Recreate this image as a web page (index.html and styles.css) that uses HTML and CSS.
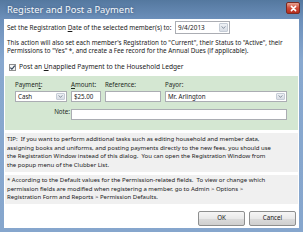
FILE: index.html
```html
<!DOCTYPE html>
<html>
<head>
<meta charset="utf-8">
<link rel="stylesheet" href="styles.css">
</head>
<body>
<div class="window">
  <div class="titlebar">
    <span class="title">Register and Post a Payment</span>
    <span class="close"><svg viewBox="0 0 10 10" width="7" height="7"><path d="M2 2 L8 8 M8 2 L2 8" stroke="#fff" stroke-width="2.2" stroke-linecap="round"/></svg></span>
  </div>
  <div class="client">
    <div class="daterow">
      <span class="txt">Set the Registration <u>D</u>ate of the selected member(s) to:</span>
      <span class="combo date"><span class="val">9/4/2013</span><span class="drop"><svg viewBox="0 0 6 4" width="5" height="3"><path d="M0.5 0.5 L3 3.2 L5.5 0.5" fill="none" stroke="#6a7585" stroke-width="1"/></svg></span></span>
    </div>
    <p class="para">This action will also set each member's Registration to "Current", their Status to "Active", their<br>Permissions to "Yes" *, and create a Fee record for the Annual Dues (if applicable).</p>
    <div class="checkrow">
      <span class="check"><svg viewBox="0 0 8 8" width="7" height="7"><path d="M1.5 4.2 L3.3 6 L6.6 1.8" fill="none" stroke="#2d3f56" stroke-width="1.3"/></svg></span>
      <span class="txt">Post an <u>U</u>napplied Payment to the Household Ledger</span>
    </div>
    <div class="green">
      <div class="grid">
        <span class="lbl c1">Paymen<u>t</u>:</span>
        <span class="lbl c2"><u>A</u>mount:</span>
        <span class="lbl c3">Reference:</span>
        <span class="lbl c4">Payor:</span>
        <span class="combo c1"><span class="val">Cash</span><span class="drop"><svg viewBox="0 0 6 4" width="5" height="3"><path d="M0.5 0.5 L3 3.2 L5.5 0.5" fill="none" stroke="#6a7585" stroke-width="1"/></svg></span></span>
        <span class="input c2"><span class="val">$25.00</span></span>
        <span class="input c3"></span>
        <span class="combo c4"><span class="val">Mr. Arlington</span><span class="drop"><svg viewBox="0 0 6 4" width="5" height="3"><path d="M0.5 0.5 L3 3.2 L5.5 0.5" fill="none" stroke="#6a7585" stroke-width="1"/></svg></span></span>
        <span class="lbl note">Note:</span>
        <span class="input noteinput"></span>
      </div>
    </div>
    <div class="panel tip">TIP:&nbsp; If you want to perform additional tasks such as editing household and member data,<br>assigning books and uniforms, and posting payments directly to the new fees, you should use<br>the Registration Window instead of this dialog.&nbsp; You can open the Registration Window from<br>the popup menu of the Clubber List.</div>
    <div class="panel foot">* According to the Default values for the Permission-related fields.&nbsp; To view or change which<br>permission fields are modified when registering a member, go to Admin &gt; Options &gt;<br>Registration Form and Reports &gt; Permission Defaults.</div>
    <div class="buttons">
      <span class="btn">OK</span>
      <span class="btn">Cancel</span>
    </div>
  </div>
</div>
</body>
</html>
```

FILE: styles.css
```css
html, body {
  margin: 0;
  padding: 0;
}
body {
  width: 303px;
  height: 232px;
  overflow: hidden;
  font-family: "Noto Sans", "DejaVu Sans", sans-serif;
}
.window {
  width: 303px;
  height: 232px;
  box-sizing: border-box;
  background: linear-gradient(to bottom, #54789f 0px, #6c8fba 19px, #88a8cf 60px, #86a6cd 100%);
  padding: 0 4px 4px 4px;
  display: flex;
  flex-direction: column;
}
.titlebar {
  height: 19px;
  flex: none;
  display: flex;
  align-items: center;
  justify-content: space-between;
  padding-left: 3px;
}
.title {
  color: #f4f8fc;
  font-size: 9.4px;
  text-shadow: 0 0 3px rgba(40, 60, 90, 0.6);
}
.close {
  width: 14px;
  height: 12px;
  margin-top: -3px;
  margin-right: -1px;
  box-sizing: border-box;
  border: 1px solid #7a2a22;
  border-radius: 2px;
  background: linear-gradient(to bottom, #e8a392, #cf4a38 50%, #b52d1d);
  display: flex;
  align-items: center;
  justify-content: center;
}
.close svg { display: block; }
.client {
  flex: 1;
  background: #ffffff;
  display: flex;
  flex-direction: column;
  padding: 0 1px;
  font-size: 6px;
  color: #1a1a1a;
  line-height: 8px;
  white-space: nowrap;
}
.daterow {
  display: flex;
  align-items: center;
  margin-top: 2px;
  padding-left: 2px;
  height: 13px;
  font-size: 6.4px;
}
.daterow .txt { width: 168px; }
.combo, .input {
  box-sizing: border-box;
  border: 1px solid #abadb3;
  background: #fff;
  display: flex;
  align-items: center;
}
.combo .val, .input .val {
  flex: 1;
  padding-left: 2px;
  overflow: hidden;
}
.drop {
  width: 9px;
  align-self: stretch;
  margin: 1px;
  border: 1px solid #c5ccd6;
  border-radius: 1px;
  background: linear-gradient(to bottom, #eef1f5, #d8dde5);
  display: flex;
  align-items: center;
  justify-content: center;
  box-sizing: border-box;
}
.drop svg { display: block; }
.date {
  width: 55px;
  height: 13px;
}
.para {
  margin: 5px 0 0 0;
  padding-left: 2px;
  font-size: 6.3px;
}
.checkrow {
  display: flex;
  align-items: center;
  margin-top: 8px;
  padding-left: 4px;
  gap: 3px;
  height: 8px;
  font-size: 6.6px;
}
.check {
  width: 7px;
  height: 7px;
  box-sizing: border-box;
  border: 1px solid #8f8f8f;
  background: #f4f4f4;
  display: flex;
  align-items: center;
  justify-content: center;
}
.check svg { display: block; width: 7px; height: 7px; flex: none; }
.green {
  margin-top: 5px;
  background: #d4e7d2;
  height: 54px;
  box-sizing: border-box;
  padding: 5px 0 0 10px;
}
.grid {
  display: grid;
  grid-template-columns: 52px 30px 56px 122px;
  grid-template-rows: 8px 11px 11px;
  column-gap: 4px;
  row-gap: 2px;
  font-size: 6.2px;
}
.grid .c1 { grid-column: 1; }
.grid .c2 { grid-column: 2; }
.grid .c3 { grid-column: 3; }
.grid .c4 { grid-column: 4; }
.grid .combo, .grid .input { grid-row: 2; height: 11px; }
.grid .lbl { grid-row: 1; color: #1e2a1e; }
.grid .note {
  grid-row: 3;
  grid-column: 1;
  text-align: right;
  align-self: center;
  margin-top: 5px;
  margin-right: -3px;
}
.grid .noteinput {
  grid-row: 3;
  grid-column: 2 / 5;
  margin-top: 5px;
}
.panel {
  background: #f0f0f0;
  padding-left: 2px;
  line-height: 8.5px;
}
.tip {
  margin-top: 3px;
  padding-top: 2px;
  padding-bottom: 3px;
}
.foot {
  margin-top: 3px;
  padding-top: 1px;
  padding-bottom: 2px;
}
.buttons {
  display: flex;
  justify-content: flex-end;
  gap: 4px;
  margin-top: 7px;
  padding-right: 2px;
}
.btn {
  width: 47px;
  height: 15px;
  box-sizing: border-box;
  border: 1px solid #8e8f8f;
  border-radius: 2px;
  background: linear-gradient(to bottom, #f6f6f6 0%, #e9e9e9 50%, #dbdbdb 51%, #cfcfcf 100%);
  display: flex;
  align-items: center;
  justify-content: center;
  color: #1a1a1a;
  font-size: 6.2px;
}
```
